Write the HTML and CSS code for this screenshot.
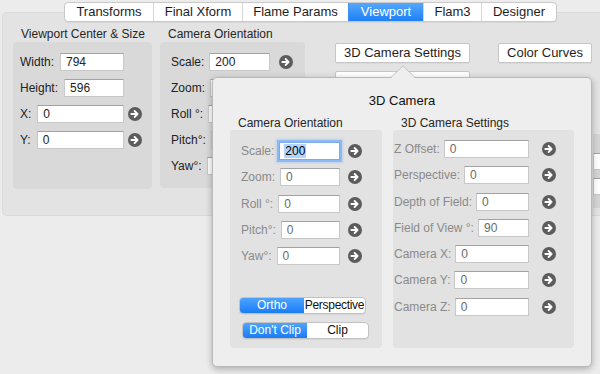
FILE: index.html
```html
<!DOCTYPE html>
<html>
<head>
<meta charset="utf-8">
<link rel="stylesheet" href="styles.css">
</head>
<body>
<div class="tabview">
  <div class="tabs">
    <div class="tab t1">Transforms</div>
    <div class="tab t2">Final Xform</div>
    <div class="tab t3">Flame Params</div>
    <div class="tab t4 sel">Viewport</div>
    <div class="tab t5">Flam3</div>
    <div class="tab t6">Designer</div>
  </div>
  <div class="content">
    <div class="group g1">
      <div class="gtitle">Viewport Center &amp; Size</div>
      <div class="box b1">
        <div class="row"><span class="lbl">Width:</span><span class="field">794</span><span class="arrow-slot"></span></div>
        <div class="row"><span class="lbl">Height:</span><span class="field">596</span><span class="arrow-slot"></span></div>
        <div class="row"><span class="lbl">X:</span><span class="field">0</span><svg class="arrow" viewBox="0 0 14 14"><circle cx="7" cy="7" r="7"/><path d="M3.3 7H9.6M6.6 4L9.6 7L6.6 10"/></svg></div>
        <div class="row"><span class="lbl">Y:</span><span class="field">0</span><svg class="arrow" viewBox="0 0 14 14"><circle cx="7" cy="7" r="7"/><path d="M3.3 7H9.6M6.6 4L9.6 7L6.6 10"/></svg></div>
      </div>
    </div>
    <div class="group g2">
      <div class="gtitle">Camera Orientation</div>
      <div class="box b2">
        <div class="row"><span class="lbl">Scale:</span><span class="field">200</span><svg class="arrow" viewBox="0 0 14 14"><circle cx="7" cy="7" r="7"/><path d="M3.3 7H9.6M6.6 4L9.6 7L6.6 10"/></svg></div>
        <div class="row"><span class="lbl">Zoom:</span><span class="field">0</span><svg class="arrow" viewBox="0 0 14 14"><circle cx="7" cy="7" r="7"/><path d="M3.3 7H9.6M6.6 4L9.6 7L6.6 10"/></svg></div>
        <div class="row"><span class="lbl">Roll °:</span><span class="field">0</span><svg class="arrow" viewBox="0 0 14 14"><circle cx="7" cy="7" r="7"/><path d="M3.3 7H9.6M6.6 4L9.6 7L6.6 10"/></svg></div>
        <div class="row"><span class="lbl">Pitch°:</span><span class="field">0</span><svg class="arrow" viewBox="0 0 14 14"><circle cx="7" cy="7" r="7"/><path d="M3.3 7H9.6M6.6 4L9.6 7L6.6 10"/></svg></div>
        <div class="row"><span class="lbl">Yaw°:</span><span class="field">0</span><svg class="arrow" viewBox="0 0 14 14"><circle cx="7" cy="7" r="7"/><path d="M3.3 7H9.6M6.6 4L9.6 7L6.6 10"/></svg></div>
      </div>
    </div>
    <div class="btncol bc1">
      <div class="btn">3D Camera Settings</div>
      <div class="btn"></div>
    </div>
    <div class="btncol bc2">
      <div class="btn">Color Curves</div>
    </div>
    <div class="hidden-col">
      <div class="box b3">
        <span class="field small"></span>
        <span class="field small"></span>
      </div>
    </div>
  </div>
</div>

<div class="popover">
  <svg class="pop-arrow" viewBox="0 0 24 13"><path class="pa-fill" d="M0 13L12 0.8L24 13Z"/><path class="pa-line" d="M0 12.5L12 0.8L24 12.5"/></svg>
  <div class="ptitle">3D Camera</div>
  <div class="pgroups">
    <div class="pgroup pg1">
      <div class="gtitle">Camera Orientation</div>
      <div class="box pb1">
        <div class="row"><span class="lbl">Scale:</span><span class="field focus"><span class="selection">200</span></span><svg class="arrow" viewBox="0 0 14 14"><circle cx="7" cy="7" r="7"/><path d="M3.3 7H9.6M6.6 4L9.6 7L6.6 10"/></svg></div>
        <div class="row"><span class="lbl">Zoom:</span><span class="field">0</span><svg class="arrow" viewBox="0 0 14 14"><circle cx="7" cy="7" r="7"/><path d="M3.3 7H9.6M6.6 4L9.6 7L6.6 10"/></svg></div>
        <div class="row"><span class="lbl">Roll °:</span><span class="field">0</span><svg class="arrow" viewBox="0 0 14 14"><circle cx="7" cy="7" r="7"/><path d="M3.3 7H9.6M6.6 4L9.6 7L6.6 10"/></svg></div>
        <div class="row"><span class="lbl">Pitch°:</span><span class="field">0</span><svg class="arrow" viewBox="0 0 14 14"><circle cx="7" cy="7" r="7"/><path d="M3.3 7H9.6M6.6 4L9.6 7L6.6 10"/></svg></div>
        <div class="row"><span class="lbl">Yaw°:</span><span class="field">0</span><svg class="arrow" viewBox="0 0 14 14"><circle cx="7" cy="7" r="7"/><path d="M3.3 7H9.6M6.6 4L9.6 7L6.6 10"/></svg></div>
        <div class="seg seg1"><span class="sitem on s-a">Ortho</span><span class="sitem s-b">Perspective</span></div>
        <div class="seg seg2"><span class="sitem on s-a">Don't Clip</span><span class="sitem s-b">Clip</span></div>
      </div>
    </div>
    <div class="pgroup pg2">
      <div class="gtitle">3D Camera Settings</div>
      <div class="box pb2">
        <div class="row"><span class="lbl">Z Offset:</span><span class="field">0</span><svg class="arrow" viewBox="0 0 14 14"><circle cx="7" cy="7" r="7"/><path d="M3.3 7H9.6M6.6 4L9.6 7L6.6 10"/></svg></div>
        <div class="row"><span class="lbl">Perspective:</span><span class="field">0</span><svg class="arrow" viewBox="0 0 14 14"><circle cx="7" cy="7" r="7"/><path d="M3.3 7H9.6M6.6 4L9.6 7L6.6 10"/></svg></div>
        <div class="row"><span class="lbl">Depth of Field:</span><span class="field">0</span><svg class="arrow" viewBox="0 0 14 14"><circle cx="7" cy="7" r="7"/><path d="M3.3 7H9.6M6.6 4L9.6 7L6.6 10"/></svg></div>
        <div class="row"><span class="lbl">Field of View °:</span><span class="field">90</span><svg class="arrow" viewBox="0 0 14 14"><circle cx="7" cy="7" r="7"/><path d="M3.3 7H9.6M6.6 4L9.6 7L6.6 10"/></svg></div>
        <div class="row"><span class="lbl">Camera X:</span><span class="field">0</span><svg class="arrow" viewBox="0 0 14 14"><circle cx="7" cy="7" r="7"/><path d="M3.3 7H9.6M6.6 4L9.6 7L6.6 10"/></svg></div>
        <div class="row"><span class="lbl">Camera Y:</span><span class="field">0</span><svg class="arrow" viewBox="0 0 14 14"><circle cx="7" cy="7" r="7"/><path d="M3.3 7H9.6M6.6 4L9.6 7L6.6 10"/></svg></div>
        <div class="row"><span class="lbl">Camera Z:</span><span class="field">0</span><svg class="arrow" viewBox="0 0 14 14"><circle cx="7" cy="7" r="7"/><path d="M3.3 7H9.6M6.6 4L9.6 7L6.6 10"/></svg></div>
      </div>
    </div>
  </div>
</div>
</body>
</html>
```

FILE: styles.css
```css
html, body {
  margin: 0;
  padding: 0;
}
body {
  width: 600px;
  height: 374px;
  overflow: hidden;
  position: relative;
  background: #ececec;
  font-family: "Liberation Sans", Arial, sans-serif;
  color: #222;
  font-size: 12px;
}

.tabview {
  box-sizing: border-box;
  margin: 12px 0 0 2px;
  width: 598px;
  height: 204px;
  background: #e3e3e3;
  border: 1px solid #dadada;
  border-right: none;
  border-radius: 5px 0 0 5px;
}

.tabs {
  box-sizing: border-box;
  display: flex;
  width: 493px;
  height: 20px;
  margin: -11px 0 0 61px;
  background: #fff;
  border: 1px solid #c9c9c9;
  border-radius: 4px;
  overflow: hidden;
  box-shadow: 0 1px 0 rgba(0,0,0,0.05);
}
.tab {
  box-sizing: border-box;
  font-size: 13px;
  line-height: 18px;
  text-align: center;
  color: #1e1e1e;
  border-left: 1px solid #d6d6d6;
}
.t1 { width: 88px; border-left: none; }
.t2 { width: 89px; }
.t3 { width: 106px; }
.t4 { width: 75px; }
.t5 { width: 58px; }
.t6 { width: 75px; }
.tab.sel {
  background: linear-gradient(#56a8fd, #1d80f7);
  color: #fff;
  border-left-color: #3c8ff5;
}

.content {
  display: flex;
  align-items: flex-start;
  padding-left: 10px;
  margin-top: 5px;
}

.group {
  display: flex;
  flex-direction: column;
  flex: none;
}
.gtitle {
  font-size: 12px;
  line-height: 14px;
  padding-left: 8px;
  color: #262626;
}
.box {
  box-sizing: border-box;
  margin-top: 1px;
  background: #d9d9d9;
  border-radius: 4px;
  display: flex;
  flex-direction: column;
  gap: 8px;
}
.g1 { width: 139px; }
.g2 { width: 145px; margin-left: 8px; }
.b1 { height: 147px; padding: 11px 10px 0 7px; }
.b2 { height: 146px; padding: 11px 12px 0 11px; }

.row {
  display: flex;
  align-items: center;
  height: 18px;
}
.lbl {
  white-space: nowrap;
  line-height: 18px;
}
.field {
  box-sizing: border-box;
  flex: 1;
  min-width: 0;
  height: 18px;
  margin-left: 6px;
  padding-left: 5px;
  background: #fff;
  border: 1px solid #c8c8c8;
  border-top-color: #a2a2a2;
  line-height: 16px;
  font-size: 12px;
  color: #222;
  white-space: nowrap;
  overflow: hidden;
}
.arrow-slot {
  width: 14px;
  height: 14px;
  margin-left: 4px;
  flex: none;
}
.arrow {
  width: 14px;
  height: 14px;
  margin-left: 4px;
  flex: none;
}
.arrow circle { fill: #5c5c5c; }
.arrow path {
  fill: none;
  stroke: #fff;
  stroke-width: 1.8;
  stroke-linecap: round;
  stroke-linejoin: round;
}
.b2 .field { margin-left: 5px; }
.b2 .arrow { margin-left: 9px; }

.btncol {
  display: flex;
  flex-direction: column;
  gap: 8px;
  margin-top: 16px;
  flex: none;
}
.bc1 { width: 135px; margin-left: 30px; }
.bc2 { width: 94px; margin-left: 28px; }
.btn {
  box-sizing: border-box;
  height: 20px;
  background: #fff;
  border: 1px solid #c6c6c6;
  border-radius: 2px;
  font-size: 13px;
  line-height: 18px;
  text-align: center;
  color: #1e1e1e;
  white-space: nowrap;
  box-shadow: 0 1px 0 rgba(0,0,0,0.04);
}

.hidden-col {
  margin-left: 1px;
  margin-top: 106px;
  width: 7px;
  flex: none;
}
.b3 {
  height: 74px;
  padding: 19px 0 0 0;
  background: #d5d5d5;
  border-radius: 0;
  overflow: hidden;
}
.field.small {
  flex: none;
  height: 17px;
  width: 7px;
  margin-left: 0;
  border-right: none;
}

/* Popover */
.popover {
  position: absolute;
  left: 212px;
  top: 77px;
  width: 380px;
  height: 290px;
  box-sizing: border-box;
  background: #eeeeee;
  border: 1px solid #b9b9b9;
  border-radius: 5px;
  box-shadow: 0 2px 7px rgba(0,0,0,0.28);
}
.pop-arrow {
  position: absolute;
  left: 178px;
  top: -13px;
  width: 24px;
  height: 13px;
  overflow: visible;
}
.pa-fill { fill: #eeeeee; }
.pa-line { fill: none; stroke: #c2c2c2; stroke-width: 1; }

.ptitle {
  text-align: center;
  font-size: 13px;
  line-height: 16px;
  padding-top: 15px;
  color: #111;
}
.pgroups {
  display: flex;
  padding-left: 17px;
  margin-top: 7px;
}
.pgroup {
  display: flex;
  flex-direction: column;
}
.pg1 { width: 152px; }
.pg2 { width: 181px; margin-left: 11px; }
.box.pb1, .box.pb2 {
  height: 218px;
  margin-top: 0;
  background: #e2e2e2;
  gap: 8.3px;
}
.pb1 { padding: 12px 20px 0 11px; }
.pb2 { padding: 10px 18px 0 1px; }
.popover .lbl { color: #8a8a8a; }
.popover .field { color: #6a6a6a; margin-left: 5px; }
.pb2 .field { margin-left: 4px; }
.pb1 .arrow { margin-left: 8px; }
.pb2 .arrow { margin-left: 13px; }

.field.focus {
  overflow: visible;
  padding-left: 4px;
  border-color: #7da9e6;
  box-shadow: 0 0 0 2px #8dbaf5, 0 0 2px 3px rgba(120,170,240,0.35);
}
.selection {
  background: #b3d4fd;
  color: #000;
  padding: 0 1px;
}

.seg {
  box-sizing: border-box;
  display: flex;
  width: 127px;
  height: 17px;
  border: 1px solid #c2c2c2;
  border-radius: 4px;
  background: #fff;
  overflow: hidden;
  box-shadow: 0 1px 0 rgba(0,0,0,0.05);
}
.seg1 { margin-top: 23.7px; margin-left: -2px; }
.seg2 { margin-top: -0.3px; margin-left: 1px; }
.sitem {
  box-sizing: border-box;
  font-size: 12px;
  line-height: 15px;
  text-align: center;
  color: #111;
  white-space: nowrap;
}
.s-a { width: 64px; }
.s-b { flex: 1; }
.seg1 .s-b { letter-spacing: -0.3px; }
.sitem.on {
  background: linear-gradient(#4ea4fd, #1a7cf6);
  color: #fff;
}
```
